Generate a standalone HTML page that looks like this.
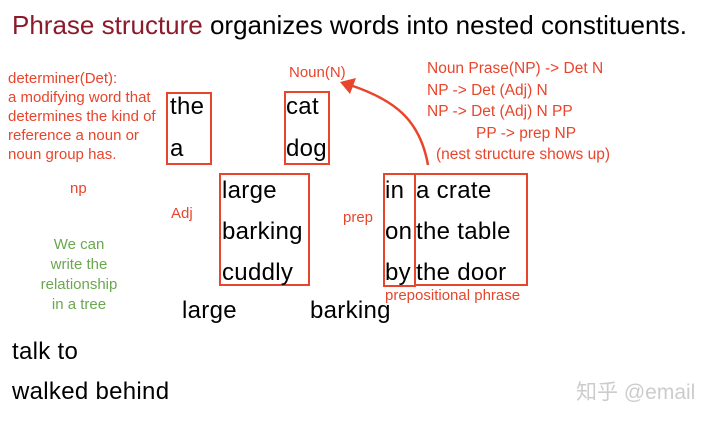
<!DOCTYPE html>
<html><head><meta charset="utf-8"><style>
body{margin:0;width:720px;height:423px;background:#fff;position:relative;overflow:hidden;font-family:"Liberation Sans","Noto Sans CJK SC",sans-serif}
.t{position:absolute;white-space:nowrap;line-height:1}
.r{color:#e8452c;font-size:15px}
.b{color:#000;font-size:24px;letter-spacing:0.3px}
.box{position:absolute;border:2px solid #e8452c;box-sizing:border-box}
</style></head><body>
<div class="t" style="left:12px;top:12px;font-size:26px"><span style="color:#8b1a2b">Phrase structure</span> organizes words into nested constituents.</div>
<div class="t r" style="left:8px;top:69px;line-height:19px">determiner(Det):<br>a modifying word that<br>determines the kind of<br>reference a noun or<br>noun group has.</div>
<div class="t r" style="left:289px;top:65px">Noun(N)</div>
<div class="t r" style="left:427px;top:58px;line-height:21.5px;font-size:15.5px">Noun Prase(NP) -&gt; Det N<br>NP -&gt; Det (Adj) N<br>NP -&gt; Det (Adj) N PP<br><span style="padding-left:49px">PP -&gt; prep NP</span><br><span style="padding-left:9px">(nest structure shows up)</span></div>
<div class="box" style="left:166px;top:92px;width:46px;height:73px"></div>
<div class="box" style="left:284px;top:91px;width:46px;height:74px"></div>
<div class="box" style="left:219px;top:173px;width:91px;height:113px"></div>
<div class="box" style="left:383px;top:173px;width:33px;height:114px"></div>
<div class="box" style="left:414px;top:173px;width:114px;height:113px"></div>
<div class="t b" style="left:170px;top:95px">the</div>
<div class="t b" style="left:170px;top:137px">a</div>
<div class="t b" style="left:286px;top:95px">cat</div>
<div class="t b" style="left:286px;top:137px">dog</div>
<div class="t b" style="left:222px;top:170px;line-height:41px">large<br>barking<br>cuddly</div>
<div class="t b" style="left:385px;top:170px;line-height:41px">in<br>on<br>by</div>
<div class="t b" style="left:416px;top:170px;line-height:41px">a crate<br>the table<br>the door</div>
<div class="t r" style="left:70px;top:181px">np</div>
<div class="t r" style="left:171px;top:206px">Adj</div>
<div class="t r" style="left:343px;top:210px">prep</div>
<div class="t" style="left:24px;top:235px;width:110px;text-align:center;color:#6aa84f;font-size:15px;line-height:20px">We can<br>write the<br>relationship<br>in a tree</div>
<div class="t r" style="left:385px;top:288px">prepositional phrase</div>
<div class="t b" style="left:182px;top:299px">large</div>
<div class="t b" style="left:310px;top:299px">barking</div>
<div class="t b" style="left:12px;top:340px">talk to</div>
<div class="t b" style="left:12px;top:380px">walked behind</div>
<div class="t" style="left:576px;top:382px;font-size:21px;color:#ccc">知乎 @email</div>
<svg style="position:absolute;left:0;top:0" width="720" height="423">
<path d="M428 165 C420 120 395 100 350 85" fill="none" stroke="#e8452c" stroke-width="2.5"/>
<path d="M340 82 L356 78 L350 94 Z" fill="#e8452c"/>
</svg>
</body></html>
